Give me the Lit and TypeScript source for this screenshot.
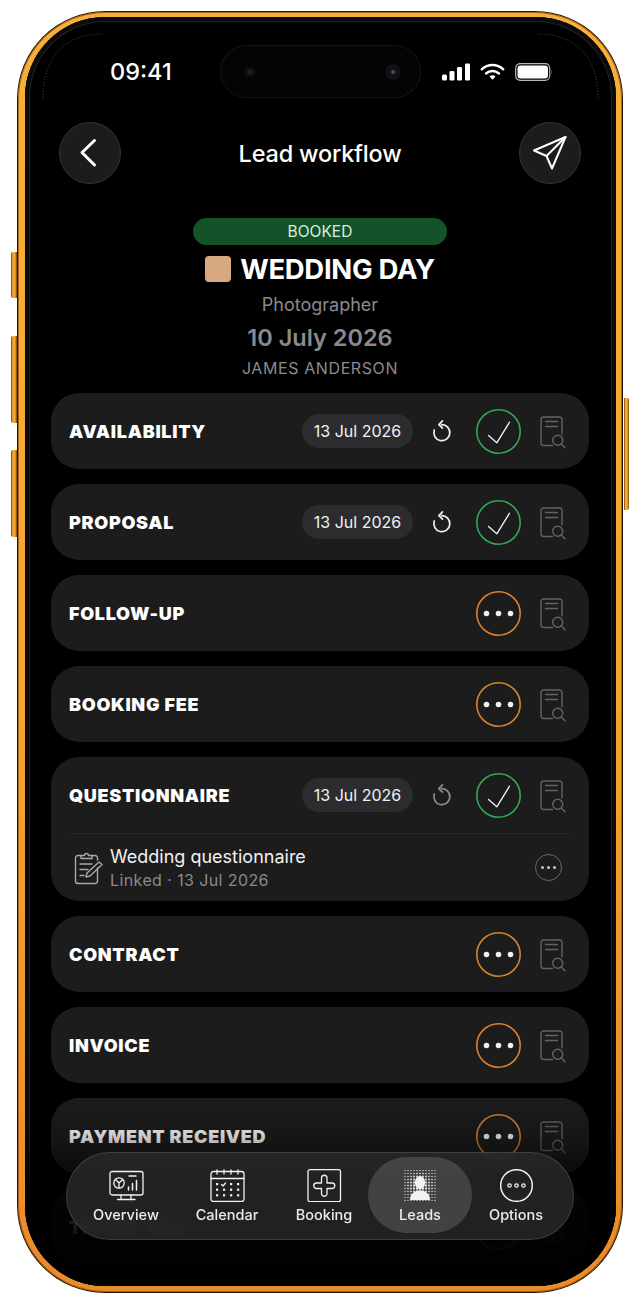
import { LitElement, html, css, svg } from "lit";
import { customElement } from "lit/decorators.js";

type Row = { t: string; done?: boolean; dim?: boolean; sub?: boolean };
const ROWS: Row[] = [
  { t: "AVAILABILITY", done: true },
  { t: "PROPOSAL", done: true },
  { t: "FOLLOW-UP" },
  { t: "BOOKING FEE" },
  { t: "QUESTIONNAIRE", done: true, dim: true, sub: true },
  { t: "CONTRACT" },
  { t: "INVOICE" },
  { t: "PAYMENT RECEIVED" },
  { t: "THANK YOU" },
];

const docIcon = html`<svg class="doc" viewBox="0 0 27 33" fill="none" stroke="#636366" stroke-width="1.400" stroke-linecap="round" stroke-linejoin="round">
  <path d="M22 18V3.500A2.500 2.500 0 0 0 19.500 1H3.500A2.500 2.500 0 0 0 1 3.500V27A2.500 2.500 0 0 0 3.500 29.500H12.500" />
  <path d="M5.500 5.500H17.500M5.500 10.500H17.500" />
  <circle cx="17.700" cy="24.300" r="5" />
  <path d="M21.300 27.900L25 31.700" />
</svg>`;

const undoIcon = (dim?: boolean) => html`<svg class="undo ${dim ? "dim" : ""}" viewBox="0 0 24 24" fill="none" stroke="currentColor" stroke-width="1.700" stroke-linecap="round" stroke-linejoin="round">
  <path d="M11.500 5.700A8 8 0 1 1 4.300 11" />
  <path d="M12.500 1.800L8.800 5.600L12.500 9.200" />
</svg>`;

const checkCircle = html`<svg class="state" viewBox="0 0 45 45" fill="none">
  <circle cx="22.500" cy="22.500" r="21.700" stroke="#30a854" stroke-width="1.600" />
  <path d="M12.500 26.500L20.800 33.800L33.500 13.200" stroke="#f2f2f2" stroke-width="1.300" stroke-linecap="round" stroke-linejoin="round" />
</svg>`;

const dotsCircle = html`<svg class="state" viewBox="0 0 45 45" fill="none">
  <circle cx="22.500" cy="22.500" r="21.700" stroke="#d9822b" stroke-width="1.600" />
  <circle cx="10.500" cy="22.500" r="2.800" fill="#f2f2f2" />
  <circle cx="22.500" cy="22.500" r="2.800" fill="#f2f2f2" />
  <circle cx="34.500" cy="22.500" r="2.800" fill="#f2f2f2" />
</svg>`;

const clipboardIcon = html`<svg class="clip" viewBox="0 0 30 34" fill="none" stroke="#a8a8a8" stroke-width="1.400" stroke-linecap="round" stroke-linejoin="round">
  <path d="M7 4.500H4A2.500 2.500 0 0 0 1.500 7V30A2.500 2.500 0 0 0 4 32.500H21A2.500 2.500 0 0 0 23.500 30V17" />
  <path d="M23.500 9V7A2.500 2.500 0 0 0 21 4.500H18" />
  <path d="M7 7.500V4.500H10.500A2 2 0 0 1 14.500 4.500H18V7.500Z" />
  <path d="M6 13H18M6 18.500H14M6 24.500H10" />
  <path d="M12 26L13 22L25 11L28 13.500L16 25Z" />
</svg>`;

const monitorIcon = html`<svg viewBox="0 0 35 33" fill="none" stroke="#f2f2f2" stroke-width="1.300" stroke-linecap="round" stroke-linejoin="round">
  <rect x="1" y="2.500" width="33" height="23.500" rx="2" />
  <path d="M12 26V30.500M22 26V30.500M8.500 30.500H26" />
  <circle cx="10" cy="14" r="5.200" />
  <path d="M10 14L6.500 10.500M10 14L13.700 10.500M10 14V19" />
  <path d="M20 7H27" />
  <path d="M19.500 21V18M23.500 21V14.500M27.500 21V11.500" stroke-width="1.500" />
</svg>`;

const calDots = [0, 1, 2, 3].flatMap((c) =>
  [0, 1, 2].map((r) =>
    c === 1 && r === 0
      ? svg``
      : svg`<rect x=${6 + c * 7} y=${14 + r * 5.600} width="2.200" height="2.200" fill="#f2f2f2" stroke="none" />`
  )
);
const calendarIcon = html`<svg viewBox="0 0 35 33" fill="none" stroke="#f2f2f2" stroke-width="1.300" stroke-linecap="round" stroke-linejoin="round">
  <rect x="1" y="2.500" width="33" height="30" rx="2.500" />
  <path d="M1 9.500H34" />
  <path d="M7 1V5M14 1V5M21 1V5M28 1V5" />
  <path d="M11.500 15.500L13 17L15.500 14" />
  ${calDots}
</svg>`;

const bookingIcon = html`<svg viewBox="0 0 35 33" fill="none" stroke="#f2f2f2" stroke-width="1.300" stroke-linejoin="round">
  <rect x="1" y="0.700" width="32.500" height="32" rx="2" />
  <path d="M14.500 8.500A2.800 2.800 0 0 1 20 8.500V14H25.500A2.800 2.800 0 0 1 25.500 19.500H20V25A2.800 2.800 0 0 1 14.500 25V19.500H9A2.800 2.800 0 0 1 9 14H14.500Z" />
</svg>`;

const leadDots = Array.from({ length: 11 }).flatMap((_, r) =>
  Array.from({ length: 11 }).map((_, c) => {
    const d = Math.hypot(c - 5, r - 5);
    const s = Math.max(1, 2.500 - d * 0.280);
    return svg`<rect x=${2 + c * 3 - s / 2} y=${1.500 + r * 3 - s / 2} width=${s} height=${s} fill="#f2f2f2" />`;
  })
);
const leadsIcon = html`<svg viewBox="0 0 35 33">
  ${leadDots}
  <ellipse cx="17" cy="13.500" rx="5.200" ry="6.500" fill="#f2f2f2" />
  <path d="M7 31C7 24.500 11.500 22.500 14.500 21.500H19.500C22.500 22.500 27 24.500 27 31Z" fill="#f2f2f2" />
</svg>`;

const optionsIcon = html`<svg viewBox="0 0 35 33" fill="none" stroke="#f2f2f2">
  <circle cx="17.500" cy="16.500" r="15.800" stroke-width="1.500" />
  <circle cx="10.500" cy="16.500" r="1.700" stroke-width="1.200" />
  <circle cx="17.500" cy="16.500" r="1.700" stroke-width="1.200" />
  <circle cx="24.500" cy="16.500" r="1.700" stroke-width="1.200" />
</svg>`;

const NAV = [
  { l: "Overview", i: monitorIcon },
  { l: "Calendar", i: calendarIcon },
  { l: "Booking", i: bookingIcon },
  { l: "Leads", i: leadsIcon, on: true },
  { l: "Options", i: optionsIcon },
];

@customElement("app-root")
export class AppRoot extends LitElement {
  static styles = css`
    :host {
      display: block;
      width: 640px;
      height: 1306px;
      background: #fff;
      overflow: hidden;
      font-family: Inter, "Liberation Sans", sans-serif;
      color: #fff;
    }
    .stage { padding: 11px 0 0 17px; }
    .phone {
      position: relative;
      width: 606px;
      height: 1282px;
      box-sizing: border-box;
      padding: 1px;
      background: #2a1500;
      border-radius: 88px;
    }
    .btn {
      position: absolute;
      width: 6px;
      background: linear-gradient(90deg, #6e3f08 0, #f2a935 30%, #f2a935 65%, #7a4508 100%);
      border-radius: 2px 0 0 2px;
    }
    .b1 { left: -6px; top: 241px; height: 46px; }
    .b2 { left: -6px; top: 325px; height: 87px; }
    .b3 { left: -6px; top: 439px; height: 87px; }
    .b4 { right: -6px; width: 5px; top: 387px; height: 112px; border-radius: 0 2px 2px 0; }
    .ring {
      height: 100%;
      box-sizing: border-box;
      padding: 5px 6px 6px 7px;
      border-radius: 87px;
      background: linear-gradient(180deg, #f7b03a 0%, #f4a734 50%, #e98a2b 100%);
      box-shadow: inset 0 0 0 1px rgba(120, 60, 0, 0.6);
    }
    .bezel {
      position: relative;
      height: 100%;
      box-sizing: border-box;
      padding: 0 27px 0 26px;
      background: #000;
      border-radius: 80px;
      overflow: hidden;
      box-shadow: inset 0 0 0 4px #0b0b0b, inset 0 0 0 5px #262220;
    }
    .status {
      display: flex;
      align-items: center;
      padding: 28px 36px 0 59px;
      height: 53px;
    }
    .time { width: 110px; font-size: 23.500px; font-weight: 500; line-height: 26px; }
    .island {
      width: 201px;
      height: 53px;
      box-sizing: border-box;
      border-radius: 27px;
      border: 1px dotted #2a2a2a;
      background: #040404;
      display: flex;
      align-items: center;
      justify-content: space-between;
      padding: 0 19px 0 23px;
    }
    .cam { width: 12px; height: 12px; border-radius: 50%; background: radial-gradient(circle, #2a2a2a 0, #0c0c0c 45%, #070707 100%); }
    .cam.r { width: 16px; height: 16px; background: radial-gradient(circle, #777 0, #141418 22%, #0c0c10 100%); }
    .sicons { flex: 1; display: flex; justify-content: flex-end; align-items: center; gap: 10px; }
    .sig { width: 28px; height: 18px; }
    .wifi { width: 25px; height: 18px; }
    .bat { width: 38px; height: 18px; }

    .head { display: flex; align-items: center; justify-content: space-between; margin-top: 24px; padding: 0 8px; }
    .round {
      width: 62px; height: 62px; box-sizing: border-box;
      border-radius: 50%;
      background: #1c1c1c;
      border: 1px solid #333335;
      display: flex; align-items: center; justify-content: center;
    }
    .round svg { width: 36px; height: 36px; }
    .title { font-size: 23.500px; font-weight: 500; letter-spacing: -0.2px; }

    .meta { display: flex; flex-direction: column; align-items: center; margin-top: 34px; }
    .pill {
      width: 254px; height: 27px;
      background: #14532a;
      border-radius: 14px;
      font-size: 15.500px; line-height: 27px; text-align: center; color: #d8efdc;
    }
    .event { display: flex; align-items: center; gap: 9px; margin-top: 7px; height: 34px; }
    .swatch { width: 26px; height: 26px; border-radius: 4px; background: #d8a981; }
    .ename { font-size: 27.500px; font-weight: 700; letter-spacing: -0.3px; }
    .role { font-size: 18px; color: #8a8a8e; line-height: 22px; margin-top: 8px; }
    .date { font-size: 23.500px; font-weight: 600; color: #8a8a8e; line-height: 30px; margin-top: 7px; }
    .client { font-size: 16px; letter-spacing: 0.6px; color: #8a8a8e; line-height: 20px; margin-top: 5px; }

    .list { display: flex; flex-direction: column; gap: 15px; margin-top: 15px; }
    .card { background: #1c1c1c; border-radius: 28px; padding: 0 24px 0 18px; }
    .row { display: flex; align-items: center; height: 76px; }
    .name { flex: 1; font-size: 18px; font-weight: 900; letter-spacing: 0.7px; white-space: nowrap; }
    .chip {
      width: 111px; height: 34px; border-radius: 17px;
      background: #2c2c2e;
      font-size: 16px; line-height: 34px; text-align: center; color: #f2f2f2;
      margin-right: 17px;
    }
    .undo { width: 24px; height: 24px; margin-right: 22px; color: #f2f2f2; }
    .undo.dim { color: #8e8e90; }
    .state { width: 45px; height: 45px; margin-right: 19px; }
    .doc { width: 27px; height: 33px; margin-right: -2px; margin-top: 2px; }
    .sub {
      display: flex; align-items: center;
      box-sizing: border-box;
      border-top: 1px solid #2a2a2c;
      margin-right: -6px;
      height: 68px;
      padding: 0 9px 0 5px;
    }
    .clip { width: 30px; height: 34px; margin-right: 6px; }
    .subtext { flex: 1; }
    .s1 { font-size: 18px; line-height: 24px; color: #f2f2f2; }
    .s2 { font-size: 16px; letter-spacing: 0.4px; line-height: 22px; color: #8a8a8e; }
    .more {
      width: 27px; height: 27px; box-sizing: border-box; border-radius: 50%;
      border: 1.500px solid #6a6a6c;
      display: flex; align-items: center; justify-content: center; gap: 3px;
    }
    .more i { width: 3px; height: 3px; border-radius: 50%; background: #c8c8c8; }

    .fade {
      position: absolute; left: 0; right: 0; bottom: 0; height: 200px;
      background: linear-gradient(180deg, rgba(0,0,0,0) 0%, rgba(0,0,0,.06) 10%, rgba(0,0,0,.2) 25%, rgba(0,0,0,.45) 35%, rgba(0,0,0,.85) 52%, rgba(0,0,0,.96) 90%, #000 100%);
      pointer-events: none;
    }
    .nav {
      position: absolute; left: 41px; top: 1135px;
      width: 508px; height: 88px; box-sizing: border-box;
      padding: 4px 13px 0 11px;
      border-radius: 44px;
      border: 1px solid rgba(255,255,255,.13);
      background: rgba(46,46,46,.72);
      backdrop-filter: blur(3px);
      display: flex;
    }
    .item {
      height: 76px; box-sizing: border-box;
      display: flex; flex-direction: column; align-items: center;
      padding-top: 12px; gap: 4px;
      border-radius: 38px;
      font-size: 14.500px; line-height: 18px; font-weight: 500; color: #ececec;
    }
    .item svg { width: 35px; height: 33px; display: block; }
    .item:nth-child(1) { width: 96px; }
    .item:nth-child(2) { width: 106px; }
    .item:nth-child(3) { width: 88px; }
    .item:nth-child(4) { width: 104px; }
    .item:nth-child(5) { width: 88px; }
    .item.on { background: rgba(95,95,95,.55); }
    .corners { position: absolute; left: 0; top: 0; width: 591px; height: 1269px; pointer-events: none; }
  `;

  render() {
    return html`<div class="stage">
      <div class="phone">
        <div class="btn b1"></div><div class="btn b2"></div><div class="btn b3"></div><div class="btn b4"></div>
        <div class="ring">
          <div class="bezel">
            <div class="status">
              <div class="time">09:41</div>
              <div class="island"><span class="cam"></span><span class="cam r"></span></div>
              <div class="sicons">
                <svg class="sig" viewBox="0 0 28 18" fill="#fff">
                  <rect x="0" y="11.500" width="5" height="6" rx="1.500" />
                  <rect x="7.500" y="8" width="5" height="9.500" rx="1.200" />
                  <rect x="15" y="4" width="5" height="13.500" rx="1.200" />
                  <rect x="23" y="0.500" width="5" height="17" rx="1.200" />
                </svg>
                <svg class="wifi" viewBox="0 0 25 18" fill="none" stroke="#fff" stroke-width="2.400" stroke-linecap="round">
                  <path d="M1.800 6.300A15.500 15.500 0 0 1 23.200 6.300" />
                  <path d="M6 10.500A9.500 9.500 0 0 1 19 10.500" />
                  <path d="M12.500 16.800L9.500 13.600A4.200 4.200 0 0 1 15.500 13.600Z" fill="#fff" stroke="none" />
                </svg>
                <svg class="bat" viewBox="0 0 38 18" fill="none">
                  <rect x="0.700" y="0.700" width="34" height="16.600" rx="4.500" stroke="#b8b8b8" stroke-width="1.200" />
                  <rect x="2.500" y="2.500" width="30.500" height="13" rx="3" fill="#fff" />
                  <path d="M36.500 7V11C37.500 10.500 37.500 7.500 36.500 7Z" fill="#8a8a8a" />
                </svg>
              </div>
            </div>

            <div class="head">
              <div class="round">
                <svg viewBox="0 0 36 36" fill="none" stroke="#fff" stroke-width="3" stroke-linecap="round" stroke-linejoin="round">
                  <path d="M22.500 5.500L10 17.500L22.500 30" />
                </svg>
              </div>
              <div class="title">Lead workflow</div>
              <div class="round">
                <svg viewBox="0 0 36 36" fill="none" stroke="#fff" stroke-width="2" stroke-linecap="round" stroke-linejoin="round">
                  <path d="M2 15.500L33.500 2L20 33.500L14.500 21Z" />
                  <path d="M33.500 2L14.500 21" />
                </svg>
              </div>
            </div>

            <div class="meta">
              <div class="pill">BOOKED</div>
              <div class="event"><span class="swatch"></span><span class="ename">WEDDING DAY</span></div>
              <div class="role">Photographer</div>
              <div class="date">10 July 2026</div>
              <div class="client">JAMES ANDERSON</div>
            </div>

            <div class="list">
              ${ROWS.map(
                (r) => html`<div class="card">
                  <div class="row">
                    <div class="name">${r.t}</div>
                    ${r.done
                      ? html`<div class="chip">13 Jul 2026</div>
                          ${undoIcon(r.dim)}`
                      : ""}
                    ${r.done ? checkCircle : dotsCircle} ${docIcon}
                  </div>
                  ${r.sub
                    ? html`<div class="sub">
                        ${clipboardIcon}
                        <div class="subtext">
                          <div class="s1">Wedding questionnaire</div>
                          <div class="s2">Linked · 13 Jul 2026</div>
                        </div>
                        <div class="more"><i></i><i></i><i></i></div>
                      </div>`
                    : ""}
                </div>`
              )}
            </div>

            <svg class="corners" viewBox="0 0 591 1269" fill="none" stroke="#4a4a4a" stroke-width="1" stroke-dasharray="1 2">
              <path d="M18 81C18 40 40 17 78 17" />
              <path d="M573 81C573 40 551 17 513 17" />
              <path d="M573 1186C573 1225 548 1251 505 1251" />
              <path d="M18 1186C18 1225 43 1251 88 1251" />
            </svg>
            <div class="fade"></div>
            <div class="nav">
              ${NAV.map(
                (n) => html`<div class="item ${n.on ? "on" : ""}">${n.i}<span>${n.l}</span></div>`
              )}
            </div>
          </div>
        </div>
      </div>
    </div>`;
  }
}
